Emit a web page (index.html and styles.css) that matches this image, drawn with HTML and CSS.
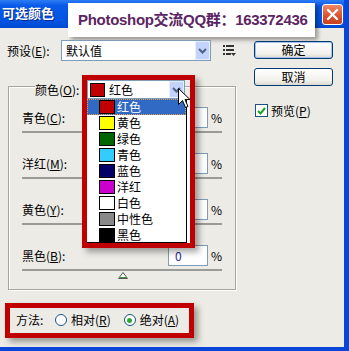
FILE: index.html
```html
<!DOCTYPE html>
<html lang="zh-CN">
<head>
    <meta charset="UTF-8">
    <title>可选颜色</title>
    <link rel="stylesheet" href="styles.css">
</head>
<body>
    <div class="window">
        <div class="titlebar">
            <span class="title">可选颜色</span>
            <span class="close">
                <svg width="13" height="13" viewBox="0 0 13 13"><path d="M2 2 L11 11 M11 2 L2 11" stroke="#fff" stroke-width="2.4" stroke-linecap="round"/></svg>
            </span>
        </div>
        <div class="watermark">Photoshop交流QQ群：163372436</div>

        <div class="client">
            <div class="left">
                <div class="preset-row">
                    <span class="label preset-label">预设(<u>E</u>):</span>
                    <div class="select preset-select">
                        <span class="select-text">默认值</span>
                        <span class="arrow-btn"><svg width="9" height="6" viewBox="0 0 9 6"><path d="M1 1 L4.5 4.5 L8 1" fill="none" stroke="#4d6185" stroke-width="2"/></svg></span>
                    </div>
                    <span class="menu-icon">
                        <svg width="13" height="11" viewBox="0 0 13 11">
                            <rect x="0" y="0" width="2" height="2" fill="#333"/><rect x="3" y="0" width="8" height="2" fill="#333"/>
                            <rect x="0" y="4" width="2" height="2" fill="#333"/><rect x="3" y="4" width="8" height="2" fill="#333"/>
                            <rect x="0" y="8" width="2" height="2" fill="#333"/><rect x="3" y="8" width="5" height="2" fill="#333"/>
                            <path d="M8 8 L13 8 L10.5 11 Z" fill="#333"/>
                        </svg>
                    </span>
                </div>

                <div class="group">
                    <div class="group-head">
                        <span class="label color-label">颜色(<u>O</u>):</span>
                        <div class="select color-select">
                            <span class="swatch swatch-sel red"></span>
                            <span class="select-text">红色</span>
                            <span class="arrow-btn"><svg width="9" height="6" viewBox="0 0 9 6"><path d="M1 1 L4.5 4.5 L8 1" fill="none" stroke="#4d6185" stroke-width="2"/></svg></span>
                        </div>
                    </div>

                    <div class="slider first">
                        <div class="slider-row">
                            <span class="label slider-label">青色(<u>C</u>):</span>
                            <span class="num"></span>
                            <span class="pct">%</span>
                        </div>
                        <div class="track"></div>
                    </div>
                    <div class="slider">
                        <div class="slider-row">
                            <span class="label slider-label">洋红(<u>M</u>):</span>
                            <span class="num"></span>
                            <span class="pct">%</span>
                        </div>
                        <div class="track"></div>
                    </div>
                    <div class="slider">
                        <div class="slider-row">
                            <span class="label slider-label">黄色(<u>Y</u>):</span>
                            <span class="num"></span>
                            <span class="pct">%</span>
                        </div>
                        <div class="track"></div>
                    </div>
                    <div class="slider">
                        <div class="slider-row">
                            <span class="label slider-label">黑色(<u>B</u>):</span>
                            <span class="num">0</span>
                            <span class="pct">%</span>
                        </div>
                        <div class="track"></div>
                        <svg class="thumb" width="10" height="7" viewBox="0 0 10 7"><path d="M5 0.5 L9.5 6.5 L0.5 6.5 Z" fill="#fff" stroke="#555"/><path d="M2 5 L8 5 L8.5 6 L1.5 6 Z" fill="#3c9c3c"/></svg>
                    </div>
                </div>

                <div class="method-row">
                    <span class="label method-label">方法:</span>
                    <span class="radio"></span>
                    <span class="label">相对(<u>R</u>)</span>
                    <span class="radio checked"></span>
                    <span class="label">绝对(<u>A</u>)</span>
                </div>
            </div>

            <div class="side">
                <button class="btn default">确定</button>
                <button class="btn">取消</button>
                <div class="check-row">
                    <span class="checkbox"><svg width="9" height="8" viewBox="0 0 9 8"><path d="M1 4 L3.5 6.5 L8 1" fill="none" stroke="#21a121" stroke-width="2"/></svg></span>
                    <span class="label">预览(<u>P</u>)</span>
                </div>
            </div>

            <!-- highlighted dropdown -->
            <div class="mark mark-color">
                <div class="drop">
                    <ul class="drop-list">
                        <li class="item active"><span class="swatch red"></span>红色</li>
                        <li class="item"><span class="swatch yellow"></span>黄色</li>
                        <li class="item"><span class="swatch green"></span>绿色</li>
                        <li class="item"><span class="swatch cyan"></span>青色</li>
                        <li class="item"><span class="swatch blue"></span>蓝色</li>
                        <li class="item"><span class="swatch magenta"></span>洋红</li>
                        <li class="item"><span class="swatch white"></span>白色</li>
                        <li class="item"><span class="swatch gray"></span>中性色</li>
                        <li class="item"><span class="swatch black"></span>黑色</li>
                    </ul>
                </div>
            </div>
            <svg class="cursor" width="13" height="21" viewBox="0 0 13 21"><path d="M0.5 0.5 L0.5 16.5 L4.5 12.5 L7.5 19.5 L10 18.5 L7 11.5 L12 11.5 Z" fill="#fff" stroke="#000"/></svg>

            <div class="mark mark-method"></div>
        </div>
    </div>
</body>
</html>
```

FILE: styles.css
```css
* {
    box-sizing: border-box;
}

body {
    margin: 0;
    font-family: "Noto Sans CJK SC", "Liberation Sans", sans-serif;
    font-size: 12px;
    color: #000;
}

.window {
    position: relative;
    width: 349px;
    height: 351px;
    display: flex;
    flex-direction: column;
    background: #ecebe6;
    border-right: 5px solid #0846d8;
    border-bottom: 4px solid #0846d8;
    overflow: hidden;
}

.titlebar {
    height: 28px;
    flex: none;
    display: flex;
    align-items: center;
    justify-content: space-between;
    padding: 0 1px 0 2px;
    background: linear-gradient(to bottom, #2d7cf5 0%, #0a5ae8 20%, #0255e4 70%, #0348cf 100%);
}

.title {
    color: #fff;
    font-weight: bold;
    font-size: 13px;
    text-shadow: 1px 1px 0 #0a2a8a;
    margin-top: -4px;
}

.close {
    width: 21px;
    height: 21px;
    display: flex;
    align-items: center;
    justify-content: center;
    border: 1px solid #fff;
    border-radius: 3px;
    background: linear-gradient(to bottom, #ee8a66, #d9502a 60%, #c8401e);
}

.watermark {
    position: absolute;
    left: 68px;
    top: 3px;
    width: 247px;
    height: 34px;
    background: #fff;
    box-shadow: 3px 3px 4px rgba(0, 0, 0, 0.35);
    color: #5b2463;
    font-family: "Liberation Sans", "Noto Sans CJK SC", sans-serif;
    font-weight: bold;
    font-size: 15px;
    letter-spacing: -0.3px;
    line-height: 34px;
    padding-left: 10px;
    white-space: nowrap;
}

.client {
    position: relative;
    flex: 1;
    display: flex;
    padding: 12px 0 0 7px;
}

.left {
    width: 229px;
}

.label {
    white-space: nowrap;
    line-height: 1;
}

.label u {
    text-decoration: underline;
    text-underline-offset: 1px;
}

.preset-row {
    display: flex;
    align-items: center;
    height: 21px;
}

.preset-label {
    width: 54px;
}

.select {
    display: flex;
    align-items: center;
    background: #fff;
    border: 1px solid #7f9db9;
}

.preset-select {
    width: 150px;
    height: 21px;
    padding-left: 4px;
}

.select-text {
    flex: 1;
}

.arrow-btn {
    width: 15px;
    height: 100%;
    display: flex;
    align-items: center;
    justify-content: center;
    background: #c3d3fb;
    border: 1px solid #e8eefc;
}

.menu-icon {
    margin-left: 12px;
    display: flex;
}

.group {
    margin: 25px 0 0 1px;
    width: 228px;
    height: 204px;
    border: 1px solid #a6a69c;
    box-shadow: inset 1px 1px 0 #fff, 1px 1px 0 #fff;
    padding-left: 13px;
}

.group-head {
    display: flex;
    align-items: center;
    margin: -7px 0 0 13px;
    height: 19px;
}

.color-label {
    width: 52px;
    background: #ecebe6;
}

.color-select {
    width: 98px;
    height: 19px;
    padding-left: 2px;
}

.color-select .select-text {
    padding-left: 2px;
}

.slider {
    margin-top: 20px;
    width: 200px;
}

.slider.first {
    margin-top: 8px;
}

.slider-row {
    display: flex;
    align-items: center;
    height: 21px;
}

.slider-label {
    width: 146px;
}

.num {
    width: 40px;
    height: 21px;
    background: #fff;
    border: 1px solid #7f9db9;
    padding-left: 6px;
    line-height: 19px;
    color: #2b2b9a;
}

.pct {
    margin-left: 3px;
}

.track {
    margin-top: 3px;
    height: 2px;
    background: #9a9a96;
}

.thumb {
    display: block;
    margin: 1px 0 0 96px;
}

.method-row {
    display: flex;
    align-items: center;
    height: 20px;
    margin: 20px 0 0 9px;
}

.method-label {
    width: 39px;
}

.radio {
    width: 12px;
    height: 12px;
    border-radius: 50%;
    border: 1px solid #1c5180;
    background: #fff;
    margin-right: 4px;
    display: flex;
    align-items: center;
    justify-content: center;
}

.radio + .label {
    margin-right: 13px;
}

.radio.checked::after {
    content: "";
    width: 5px;
    height: 5px;
    border-radius: 50%;
    background: #2fa82f;
}

.side {
    margin-left: 18px;
    padding-top: 1px;
    width: 79px;
    display: flex;
    flex-direction: column;
}

.btn {
    width: 79px;
    height: 18px;
    margin: 0 0 9px 0;
    padding: 0;
    font-family: inherit;
    font-size: 12px;
    line-height: 1;
    border: 1px solid #003c74;
    border-radius: 3px;
    background: linear-gradient(to bottom, #ffffff, #f2f1ec 70%, #dcdad0);
}

.btn.default {
    box-shadow: inset 0 0 0 1px #a9c0ec;
}

.check-row {
    display: flex;
    align-items: center;
    margin: 9px 0 0 1px;
}

.checkbox {
    width: 13px;
    height: 13px;
    border: 1px solid #1c5180;
    background: #fff;
    display: flex;
    align-items: center;
    justify-content: center;
    margin-right: 3px;
}

/* red marks drawn over the dialog */
.mark {
    position: absolute;
    border: 5px solid #c00000;
    box-shadow: 4px 4px 6px rgba(0, 0, 0, 0.35);
}

.mark-color {
    left: 82px;
    top: 47px;
    width: 113px;
    height: 173px;
}

.mark-method {
    left: 5px;
    top: 275px;
    width: 189px;
    height: 35px;
}

.drop {
    margin-top: 19px;
    height: 144px;
    background: #fff;
}

.drop-list {
    list-style: none;
    margin: 0;
    padding: 0;
    width: 100px;
    height: 144px;
    border: 1px solid #000;
    border-top: none;
    border-left: none;
}

.item {
    display: flex;
    align-items: center;
    height: 16px;
    line-height: 16px;
    padding-left: 12px;
    font-size: 12px;
}

.item.active {
    background: #316ac5;
    color: #fff;
    outline: 1px dotted #e0a050;
    outline-offset: -1px;
}

.swatch {
    width: 16px;
    height: 14px;
    border: 1px solid #000;
    margin-right: 2px;
    flex: none;
}

.swatch-sel {
    width: 15px;
}

.red { background: #c00000; }
.yellow { background: #ffff00; }
.green { background: #006400; }
.cyan { background: #33ccff; }
.blue { background: #000066; }
.magenta { background: #cc00cc; }
.white { background: #ffffff; }
.gray { background: #888888; }
.black { background: #000000; }

.cursor {
    position: absolute;
    left: 178px;
    top: 60px;
}
```
